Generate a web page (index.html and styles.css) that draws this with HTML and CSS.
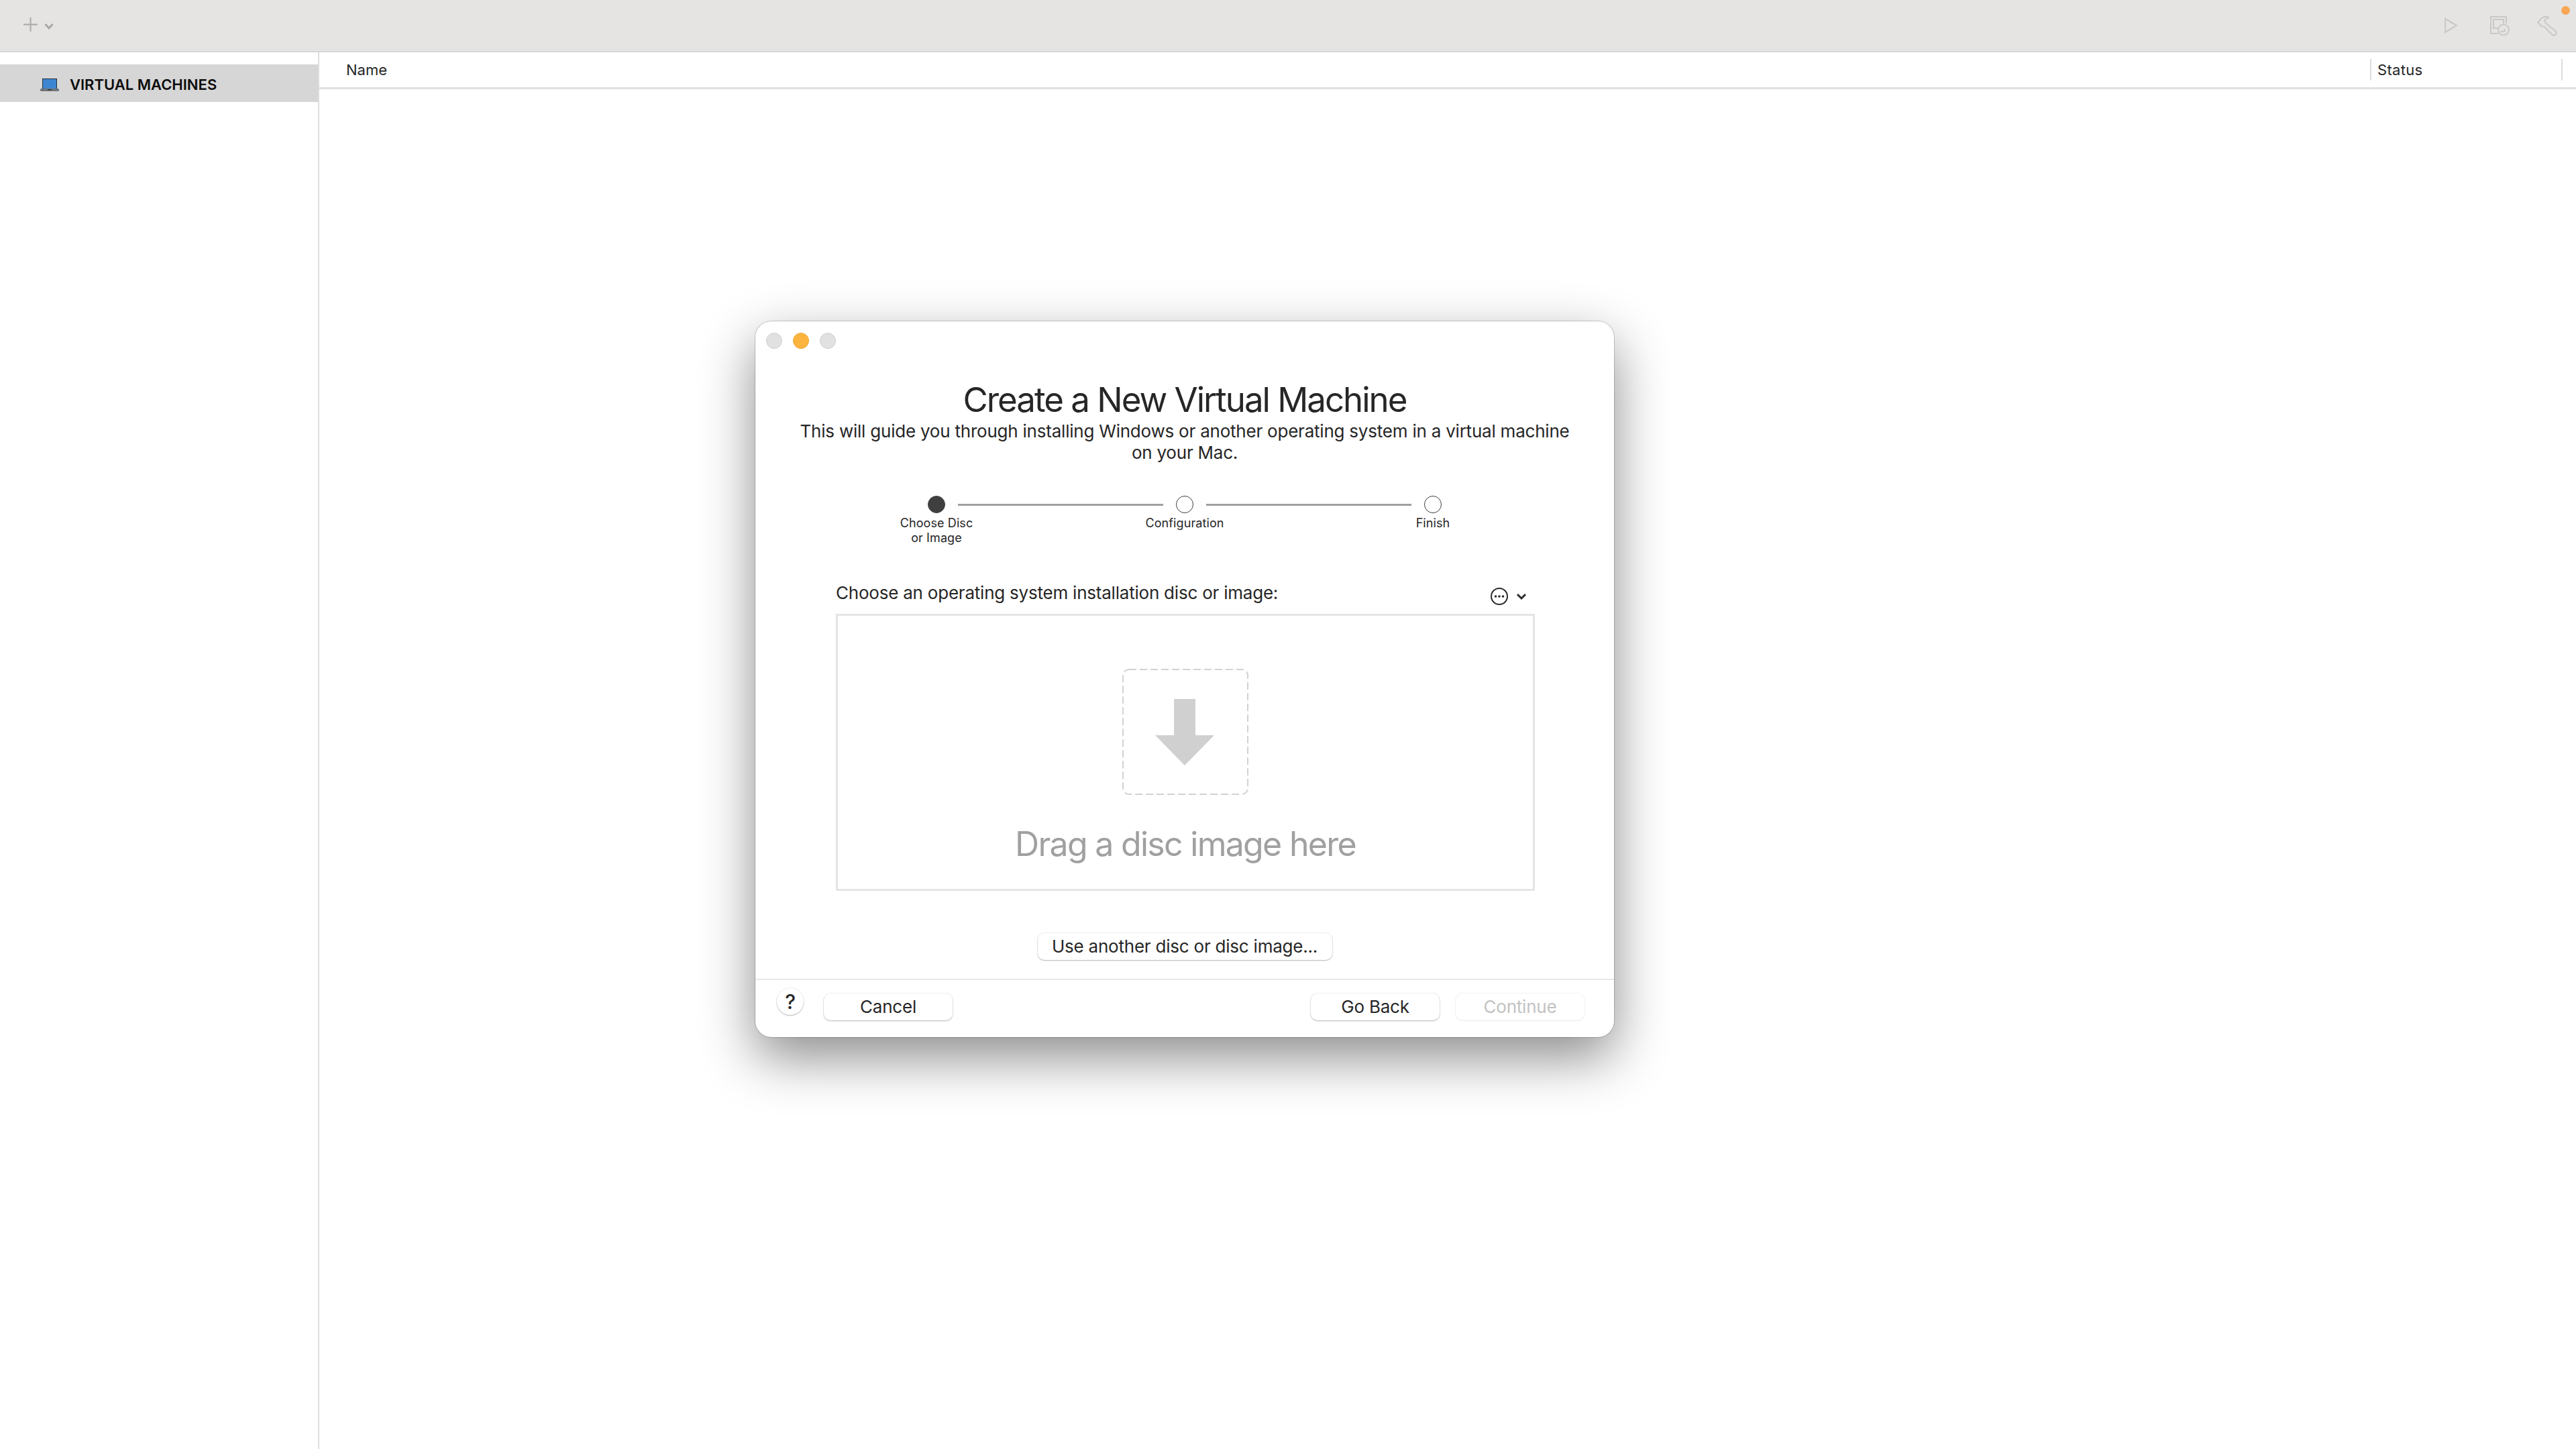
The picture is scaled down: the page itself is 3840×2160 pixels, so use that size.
FILE: index.html
```html
<html>

<head>
    <meta charset="utf-8">
    <title>Virtual Machines</title>
    <link rel="stylesheet" href="styles.css">
</head>

<body>
    <div class="toolbar">
        <div class="toolbar-left">
            <svg width="45" height="21" viewBox="0 0 45 21">
                <path d="M10.5 0V21M0 10.5H21" stroke="#a9a8a6" stroke-width="2" fill="none" />
                <path d="M32.5 10L38 16L43.5 10" stroke="#a9a8a6" stroke-width="3" fill="none" />
            </svg>
        </div>
        <div class="toolbar-right">
            <svg class="play" width="20" height="24" viewBox="0 0 20 24">
                <path d="M1.2 2L18 12L1.2 22Z" stroke="#c8c8c7" stroke-width="2.2" fill="none" />
            </svg>
            <svg width="30" height="30" viewBox="0 0 30 30">
                <path d="M12 26H1V1H24V11" stroke="#c8c8c7" stroke-width="2" fill="none" />
                <path d="M11 18H5V5H20V11" stroke="#c8c8c7" stroke-width="2" fill="none" />
                <circle cx="20" cy="20.500" r="8" stroke="#c8c8c7" stroke-width="2" fill="#e5e4e2" />
                <path d="M15.500 23H21.500V19" stroke="#c8c8c7" stroke-width="2" fill="none" />
            </svg>
            <svg width="30" height="30" viewBox="0 0 30 30">
                <path d="M1 9.500L6.500 3.500C9.500 .8 13.500 .5 17 1.800V2.500C14.500 3 12.500 4.500 11.500 6C11 7.500 11.500 9 13 10.500L27.500 22.500C29 24 29 26 27.500 27.500C26 29 24 29 22.500 27.500L10.500 15.800C9 15.500 7.500 15.500 6.500 15Z" stroke="#c8c8c7" stroke-width="2" fill="none" />
            </svg>
            <span class="badge"></span>
        </div>
    </div>

    <div class="main">
        <div class="sidebar">
            <div class="sidebar-item">
                <svg width="28" height="19" viewBox="0 0 28 19">
                    <rect x="3.500" y="0.500" width="21" height="15" fill="#3d85d1" stroke="#27303a" />
                    <rect x="0" y="15" width="28" height="4" rx="1.500" fill="#70757b" />
                    <rect x="11" y="16" width="6" height="1.500" fill="#33373b" />
                </svg>
                <span>VIRTUAL MACHINES</span>
            </div>
        </div>
        <div class="list">
            <div class="list-header">
                <div class="col-name">Name</div>
                <div class="col-status">Status</div>
            </div>
        </div>
    </div>

    <div class="dialog">
        <div class="lights">
            <span class="light"></span>
            <span class="light light-min"></span>
            <span class="light"></span>
        </div>

        <h1 class="title">Create a New Virtual Machine</h1>
        <p class="intro">
            This will guide you through installing Windows or another operating system in a virtual machine<br>
            on your Mac.
        </p>

        <div class="steps">
            <span class="dot dot-on"></span>
            <span class="step-line"></span>
            <span class="dot"></span>
            <span class="step-line"></span>
            <span class="dot"></span>
            <div class="step-label">Choose Disc<br>or Image</div>
            <div class="step-label step-two">Configuration</div>
            <div class="step-label step-three">Finish</div>
        </div>

        <div class="picker">
            <div class="picker-head">
                <span>Choose an operating system installation disc or image:</span>
                <svg class="more" width="54" height="26" viewBox="0 0 54 26">
                    <circle cx="13" cy="13" r="12" stroke="#2b2b2b" stroke-width="2" fill="none" />
                    <circle cx="7.500" cy="13" r="1.800" fill="#2b2b2b" />
                    <circle cx="13" cy="13" r="1.800" fill="#2b2b2b" />
                    <circle cx="18.500" cy="13" r="1.800" fill="#2b2b2b" />
                    <path d="M40 10L46 16L52 10" stroke="#2b2b2b" stroke-width="3" fill="none" />
                </svg>
            </div>
            <div class="dropzone">
                <svg width="188" height="188" viewBox="0 0 188 188">
                    <rect x="1" y="1" width="186" height="186" rx="9" stroke="#d2d2d2" stroke-width="2" stroke-dasharray="11 5" fill="none" />
                    <path d="M77 45H109V99H137L93 144L49 99H77Z" fill="#d0d0d0" />
                </svg>
                <div class="drop-text">Drag a disc image here</div>
            </div>
        </div>

        <div class="other-row">
            <button class="btn btn-wide">Use another disc or disc image...</button>
        </div>

        <div class="footer">
            <button class="help">?</button>
            <button class="btn">Cancel</button>
            <span class="spacer"></span>
            <button class="btn">Go Back</button>
            <button class="btn" disabled>Continue</button>
        </div>
    </div>
</body>

</html>
```

FILE: styles.css
```css
html,
body {
    margin: 0;
    width: 3840px;
    height: 2160px;
    overflow: hidden;
    background-color: #fff;
}

body {
    font: 400 26px/32px Inter, "Noto Sans", sans-serif;
    letter-spacing: -0.22px;
    color: #262626;
}

svg {
    display: block;
}

.toolbar {
    height: 76px;
    box-sizing: content-box;
    background-color: #e5e4e2;
    border-bottom: 2px solid #d6d6d6;
    display: flex;
    justify-content: space-between;
}

.toolbar-left {
    padding: 26px 0 0 35px;
}

.toolbar-right {
    position: relative;
    display: flex;
    align-items: flex-start;
    gap: 40px;
    padding: 24px 28px 0 0;
}

.play {
    margin: 2px 8px 0 0;
}

.badge {
    position: absolute;
    right: 9px;
    top: 9px;
    width: 13px;
    height: 13px;
    border-radius: 50%;
    background-color: #f9a655;
}

.main {
    display: flex;
    height: 2082px;
}

.sidebar {
    width: 474px;
    border-right: 2px solid #dedede;
    padding-top: 18px;
}

.sidebar-item {
    height: 52px;
    padding: 4px 0 0 60px;
    background-color: #d6d6d6;
    display: flex;
    align-items: center;
    gap: 16px;
    font-size: 22px;
    font-weight: 600;
    line-height: 26px;
    letter-spacing: 0;
    color: #0d0d0d;
}

.list {
    flex: 1;
}

.list-header {
    height: 52px;
    border-bottom: 3px solid #e0e0e0;
    display: flex;
    font-size: 22px;
    line-height: 26px;
    letter-spacing: 0;
}

.col-name {
    flex: 1;
    padding: 13px 0 0 40px;
}

.col-status {
    width: 287px;
    height: 32px;
    margin: 10px 20px 0 0;
    padding: 3px 0 0 9px;
    box-sizing: border-box;
    border-left: 2px solid #dcdcdc;
    border-right: 2px solid #dcdcdc;
    letter-spacing: 0.3px;
}

.dialog {
    position: absolute;
    left: 1126px;
    top: 479px;
    width: 1280px;
    height: 1067px;
    background-color: #fff;
    border-radius: 24px;
    box-shadow: 0 0 0 1px rgba(0, 0, 0, .18), 0 30px 80px rgba(0, 0, 0, .46);
}

.lights {
    display: flex;
    gap: 16px;
    padding: 17px 0 0 16px;
}

.light {
    width: 24px;
    height: 24px;
    box-sizing: border-box;
    border-radius: 50%;
    background-color: #e1e1e1;
    border: 1px solid #cfcfcf;
}

.light-min {
    background-color: #fdb43f;
    border-color: #eba432;
}

.title {
    margin: 46px 0 0 0;
    font-size: 51px;
    font-weight: 400;
    line-height: 60px;
    letter-spacing: -2px;
    text-align: center;
}

.intro {
    margin: 1px 0 0 0;
    text-align: center;
}

.steps {
    display: grid;
    grid-template-columns: 26px 306px 26px 306px 26px;
    column-gap: 19px;
    justify-content: center;
    align-items: center;
    margin-top: 48px;
}

.dot {
    width: 26px;
    height: 26px;
    box-sizing: border-box;
    border-radius: 50%;
    border: 1px solid #3f3f3f;
    background-color: #fff;
}

.dot-on {
    background-color: #3f3f3f;
}

.step-line {
    height: 3px;
    background-color: #a0a0a0;
}

.step-label {
    grid-row: 2;
    grid-column: 1;
    justify-self: center;
    white-space: nowrap;
    height: 44px;
    margin-top: 4px;
    font-size: 18px;
    line-height: 22px;
    letter-spacing: 0.1px;
    text-align: center;
}

.step-two {
    grid-column: 3;
}

.step-three {
    grid-column: 5;
}

.picker {
    margin: 55px 118px 0 120px;
}

.picker-head {
    display: flex;
    justify-content: space-between;
    height: 32px;
    margin-bottom: 15px;
}

.more {
    margin: 8px 12px 0 0;
}

.dropzone {
    height: 413px;
    box-sizing: border-box;
    border: 3px solid #e5e5e5;
    padding-top: 79px;
    display: flex;
    flex-direction: column;
    align-items: center;
}

.drop-text {
    margin-top: 43px;
    font-size: 50px;
    line-height: 60px;
    letter-spacing: -1.7px;
    color: #a0a0a0;
}

.other-row {
    display: flex;
    justify-content: center;
    margin-top: 63px;
    padding-bottom: 28px;
    border-bottom: 2px solid #e8e8e8;
}

button {
    font: inherit;
    letter-spacing: inherit;
    color: #262626;
    background-color: #fff;
    border: 0;
    padding: 0;
}

.btn {
    width: 192px;
    height: 40px;
    border-radius: 10px;
    line-height: 40px;
    box-shadow: 0 0 0 1px rgba(0, 0, 0, .05), 0 1px 2px rgba(0, 0, 0, .25);
}

.btn-wide {
    width: 439px;
}

.btn[disabled] {
    color: #c2c2c2;
    box-shadow: 0 0 0 1px rgba(0, 0, 0, .05), 0 1px 1px rgba(0, 0, 0, .04);
}

.footer {
    display: flex;
    align-items: flex-start;
    gap: 24px;
    padding: 20px 44px 0 32px;
}

.help {
    width: 40px;
    height: 40px;
    margin: -8px 6px 0 0;
    border-radius: 50%;
    font-size: 30px;
    font-weight: 500;
    line-height: 38px;
    box-shadow: 0 0 0 1px rgba(0, 0, 0, .05), 0 1px 2px rgba(0, 0, 0, .25);
}

.spacer {
    flex: 1;
}
```
